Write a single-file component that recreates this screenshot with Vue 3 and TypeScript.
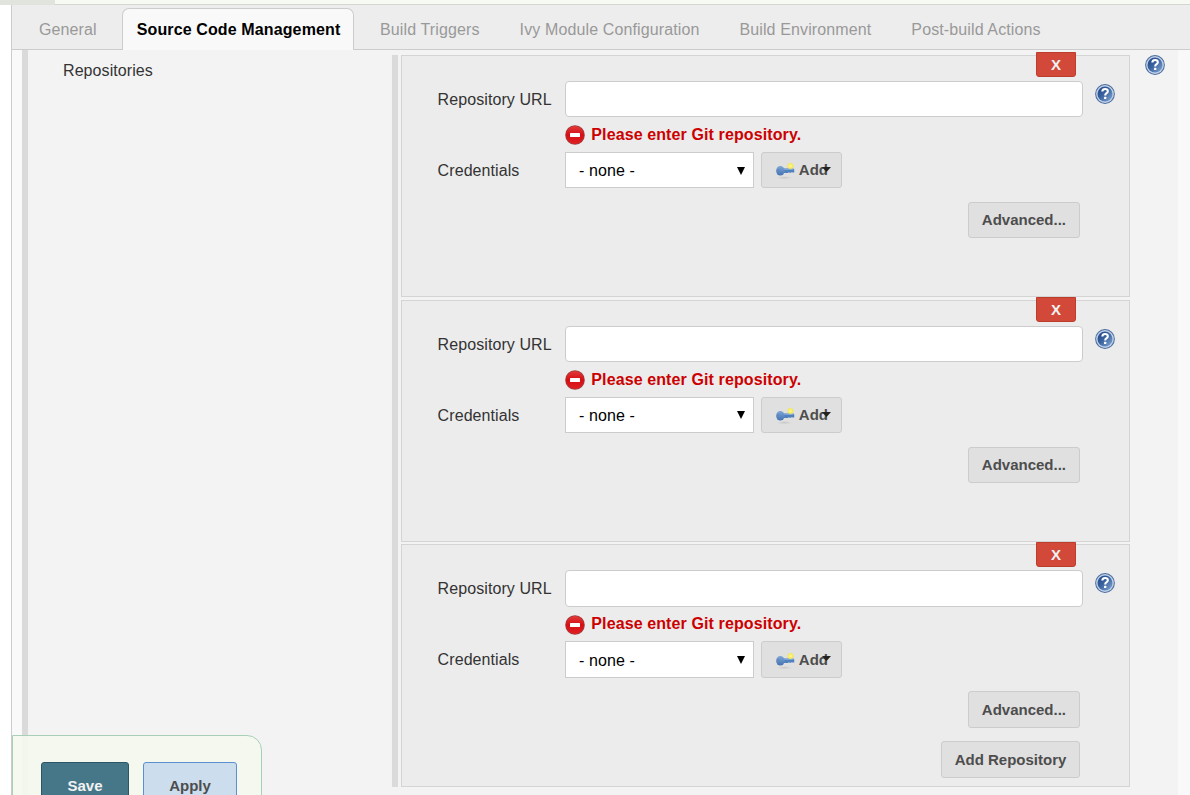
<script setup lang="ts">
import { ref } from 'vue'

interface Repo {
  id: number
  url: string
  credentials: string
}

const tabs = ['General', 'Source Code Management', 'Build Triggers', 'Ivy Module Configuration', 'Build Environment', 'Post-build Actions']
const active = ref('Source Code Management')
const repos = ref<Repo[]>([
  { id: 1, url: '', credentials: 'none' },
  { id: 2, url: '', credentials: 'none' },
  { id: 3, url: '', credentials: 'none' },
])
let nextId = 4

function addRepo() {
  repos.value.push({ id: nextId++, url: '', credentials: 'none' })
}

function removeRepo(id: number) {
  repos.value = repos.value.filter((r) => r.id !== id)
}
</script>

<template>
  <div class="page">
    <svg class="defs" width="0" height="0" aria-hidden="true">
      <defs>
        <linearGradient id="helpFill" x1="0" y1="0" x2="1" y2="1">
          <stop offset="0" stop-color="#1f4384" />
          <stop offset="0.45" stop-color="#39629f" />
          <stop offset="1" stop-color="#86a9d5" />
        </linearGradient>
        <linearGradient id="errFill" x1="0" y1="0" x2="0" y2="1">
          <stop offset="0" stop-color="#e23a3a" />
          <stop offset="0.5" stop-color="#d40f14" />
          <stop offset="1" stop-color="#e02024" />
        </linearGradient>
        <linearGradient id="keyFill" x1="0" y1="0" x2="0" y2="1">
          <stop offset="0" stop-color="#7fa5d6" />
          <stop offset="1" stop-color="#4373b2" />
        </linearGradient>
        <radialGradient id="starFill">
          <stop offset="0" stop-color="#fffa9a" />
          <stop offset="0.6" stop-color="#f5e95a" />
          <stop offset="1" stop-color="#f0e35a" stop-opacity="0" />
        </radialGradient>
        <radialGradient id="keyShadow">
          <stop offset="0" stop-color="#b0b0b0" />
          <stop offset="1" stop-color="#c8c8c8" stop-opacity="0" />
        </radialGradient>
        <symbol id="help" viewBox="0 0 20 20">
          <circle cx="10" cy="10" r="9.9" fill="#4b6c9f" />
          <circle cx="10" cy="10" r="8.9" fill="#c0d1e7" />
          <circle cx="10" cy="10" r="7.5" fill="url(#helpFill)" />
          <path d="M7.3 7.5Q7.5 5 10.1 5Q12.8 5 12.8 7.2Q12.8 8.5 11.3 9.4Q10.2 10.1 10.2 11.5" fill="none" stroke="#fff" stroke-width="2.1" />
          <rect x="9" y="12.7" width="2.3" height="2.2" rx="0.5" fill="#fff" />
        </symbol>
      </defs>
    </svg>

    <div class="crumbs"><div class="crumb-edge"></div></div>

    <div class="form">
      <nav class="tabs">
        <div
          v-for="tab in tabs"
          :key="tab"
          class="tab"
          :class="{ active: tab === active }"
          @click="active = tab"
        >{{ tab }}</div>
      </nav>

      <div class="body">
        <section class="scm">
          <div class="section-name">Repositories</div>
          <div class="repo-list">
            <div v-for="(repo, i) in repos" :key="repo.id" class="chunk">
              <button class="remove" @click="removeRepo(repo.id)">X</button>
              <div class="row">
                <label class="label">Repository URL</label>
                <input v-model="repo.url" class="url" type="text" />
                <svg class="help" width="20" height="20"><use href="#help" /></svg>
              </div>
              <div v-if="!repo.url" class="error">
                <svg width="20" height="20" viewBox="0 0 20 20">
                  <circle cx="10" cy="10" r="9.8" fill="#a33a3a" />
                  <circle cx="10" cy="10" r="9" fill="url(#errFill)" />
                  <rect x="5" y="8" width="10" height="4" rx="0.5" fill="#fff" />
                </svg>
                <span>Please enter Git repository.</span>
              </div>
              <div class="row creds">
                <label class="label">Credentials</label>
                <div class="select">
                  <span>- none -</span>
                  <svg width="8" height="8" viewBox="0 0 8 8"><path d="M0 0H8L4 8Z" fill="#000" /></svg>
                </div>
                <button class="btn add">
                  <svg class="key" width="20" height="20" viewBox="0 0 20 20">
                    <ellipse cx="9.5" cy="17.8" rx="8.5" ry="1.8" fill="url(#keyShadow)" opacity="0.6" />
                    <path d="M7 8.4H18.4L19.4 9.6V12.6H17.6L17 12L16.2 12.8H14.6L14 12.2L13 13H8Z" fill="#5081be" />
                    <path d="M8 9.4H18.4" stroke="#7ba4d8" stroke-width="1.2" />
                    <ellipse cx="5.4" cy="10.8" rx="4.3" ry="4.8" fill="url(#keyFill)" />
                    <ellipse cx="3.4" cy="10.4" rx="0.9" ry="1.4" fill="#5f86bb" />
                    <circle cx="15.6" cy="6" r="3.8" fill="url(#starFill)" />
                  </svg>
                  <span>Add</span>
                  <svg class="caret" width="9" height="5" viewBox="0 0 9 5"><path d="M0 0H9L4.5 5Z" fill="#222" /></svg>
                </button>
              </div>
              <div class="actions">
                <button class="btn">Advanced...</button>
                <button v-if="i === repos.length - 1" class="btn add-repo" @click="addRepo">Add Repository</button>
              </div>
            </div>
          </div>
          <svg class="section-help" width="20" height="20"><use href="#help" /></svg>
        </section>
      </div>
    </div>

    <div class="save-bar">
      <button class="btn save">Save</button>
      <button class="btn apply">Apply</button>
    </div>
  </div>
</template>

<style>
body {
  overflow: hidden;
}
</style>

<style scoped>
.page {
  position: relative;
  width: 1190px;
  height: 795px;
  overflow: hidden;
  background: #fff;
  color: #333;
  font: 16px/20px "Liberation Sans", Arial, sans-serif;
}
.page * {
  box-sizing: border-box;
}
.defs {
  position: absolute;
}
.crumbs {
  height: 5px;
  background: #f6faf2;
  border-bottom: 1px solid #d3d7cf;
}
.crumb-edge {
  width: 55px;
  height: 5px;
  background: #e0e4dc;
}
.form {
  margin-left: 11px;
  height: 790px;
  border-left: 1px solid #ccc;
  background: #f9f9f9;
}
.tabs {
  display: flex;
  align-items: flex-end;
  height: 45px;
  padding-left: 12px;
  background: #ededed;
  border-bottom: 1px solid #ccc;
}
.tab {
  height: 42px;
  margin-bottom: -1px;
  padding: 11px 14px 0;
  border: 1px solid transparent;
  border-bottom: 0;
  margin-right: 10px;
  color: #999;
  letter-spacing: 0.12px;
  white-space: nowrap;
  cursor: pointer;
}
.tab.active {
  width: 232px;
  margin-right: 11.3px;
  border-color: #ccc;
  border-radius: 7px 7px 0 0;
  background: #f9f9f9;
  color: #000;
  font-weight: bold;
}
.body {
  height: 745px;
  padding: 0 12px 0 10px;
}
.scm {
  display: flex;
  align-items: flex-start;
  height: 745px;
  background: #f3f3f3;
  border-left: 6px solid #dadada;
}
.section-name {
  width: 364px;
  padding: 11px 0 0 35px;
  letter-spacing: 0.08px;
}
.repo-list {
  display: flex;
  flex-direction: column;
  gap: 2.5px;
  width: 738px;
  margin-top: 5px;
  padding-left: 3px;
  border-left: 6px solid #dadada;
}
.section-help {
  margin: 5px 0 0 15px;
}
.chunk {
  position: relative;
  height: 242.2px;
  padding: 25px 0 0 36px;
  background: #ececec;
  border: 1px solid #d4d4d4;
}
.remove {
  position: absolute;
  top: -3.8px;
  right: 53px;
  width: 40px;
  height: 25px;
  padding: 0;
  border: 1px solid #bd3d2d;
  border-radius: 0 0 3px 3px;
  background: #d24939;
  color: #f2f2f2;
  font: bold 15px/23px "Liberation Sans", Arial, sans-serif;
}
.row {
  display: flex;
  align-items: center;
  height: 36.4px;
}
.label {
  width: 127.4px;
  margin-left: -0.4px;
  padding-top: 1.4px;
  letter-spacing: 0.08px;
  white-space: nowrap;
}
.url {
  width: 518px;
  height: 36.4px;
  border: 1px solid #ccc;
  border-radius: 4px;
  background: #fff;
  outline: none;
}
.help {
  margin: -10.4px 0 0 12px;
}
.error {
  display: flex;
  align-items: center;
  gap: 6.3px;
  height: 34.6px;
  padding: 0.6px 0 0 127px;
  color: #c00;
  font-weight: bold;
  letter-spacing: 0.11px;
}
.error svg {
  margin-top: 0.4px;
}
.select {
  display: flex;
  align-items: center;
  justify-content: space-between;
  width: 189px;
  height: 36.4px;
  padding: 2.6px 8px 0 13px;
  border: 1px solid #ccc;
  background: #fff;
  color: #000;
  letter-spacing: 0.1px;
}
.select svg {
  margin-top: -1.6px;
}
.btn {
  height: 36.4px;
  padding: 0 13px;
  border: 1px solid #ccc;
  border-radius: 3px;
  background: #e0e0e0;
  color: #4d4d4d;
  font: bold 15px/32px "Liberation Sans", Arial, sans-serif;
  white-space: nowrap;
}
.add {
  position: relative;
  display: flex;
  align-items: center;
  width: 81px;
  margin-left: 7px;
}
.key {
  margin-right: 4px;
}
.caret {
  position: absolute;
  right: 10.5px;
  top: 14px;
}
.actions {
  display: flex;
  flex-direction: column;
  align-items: flex-end;
  gap: 13.6px;
  padding: 13.6px 49px 0 0;
}
.actions .btn {
  padding-top: 0.4px;
}
.actions .add-repo {
  width: 139px;
  padding: 0.4px 0 0;
}
.save-bar {
  position: absolute;
  left: 12px;
  top: 735px;
  display: flex;
  gap: 14px;
  width: 250px;
  height: 80px;
  padding: 26px 0 0 28px;
  border: 1px solid #a8d0b8;
  border-radius: 0 15px 0 0;
  background: rgba(245, 249, 239, 0.92);
}
.save-bar .btn {
  height: 48px;
  padding: 0;
  line-height: 46px;
}
.save-bar .save {
  width: 88px;
  border-color: #2d5565;
  background: #467789;
  color: #f2f2f2;
}
.save-bar .apply {
  width: 94px;
  border-color: #5c8fd0;
  background: #ccdded;
}
</style>
